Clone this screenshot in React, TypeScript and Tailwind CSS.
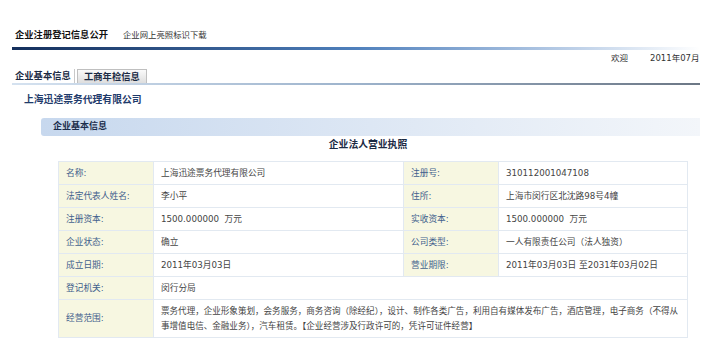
import React from "react";

const F = { fontFamily: '"DejaVu Sans", "Noto Sans CJK SC", sans-serif' };

function Label({ children }: { children: React.ReactNode }) {
  return (
    <td className="w-[95px] bg-[#f7f7e1] border border-[#e2e9f1] pl-[7px] text-[#41608c] align-middle">
      {children}
    </td>
  );
}
function Value({ children, span }: { children: React.ReactNode; span?: number }) {
  return (
    <td colSpan={span} className="bg-white border border-[#e2e9f1] pl-[7px] text-[#444] align-middle">
      {children}
    </td>
  );
}

export default function App() {
  return (
    <div className="w-[720px] h-[354px] bg-white overflow-hidden" style={F}>
      <div className="w-[700px] overflow-hidden">
        {/* top nav */}
        <div className="pt-[29px] pl-[15px] flex items-center h-[41px] text-[9px] leading-[12px]">
          <span className="font-bold text-[#111] text-[9.3px]">企业注册登记信息公开</span>
          <span className="ml-[15px] text-[#333] text-[8.4px]">企业网上亮照标识下载</span>
        </div>
        <div className="mt-[6px] ml-[12px] h-[3px] bg-gradient-to-r from-[#142f5c] via-[#4f80bc] to-white" />
        {/* welcome */}
        <div className="h-[16px] flex items-center text-[8.5px] text-[#333] whitespace-nowrap">
          <span className="ml-[611px]">欢迎</span>
          <span className="ml-[22px]">2011年07月</span>
        </div>
        {/* tabs */}
        <div className="mt-[3px] flex items-end h-[14px] pl-[12px] text-[9.3px] leading-[14px] font-bold text-[#1b2a44]">
          <div className="w-[63px] h-[14px] pl-[3px] border-r border-[#c9c9c9] bg-white">企业基本信息</div>
          <div className="ml-[2px] w-[70px] h-[14px] pl-[6px] border border-b-0 border-[#bfbfbf] bg-gradient-to-b from-[#fafafa] to-[#dedede]">工商年检信息</div>
        </div>
        <div className="ml-[12px] h-[2px] bg-gradient-to-r from-[#d5e2f0] via-[#9db3cc] to-[#6c7785]" />
        {/* company name */}
        <div className="mt-[9px] pl-[24px] h-[12px] leading-[12px] text-[9.8px] font-bold text-[#1f3b6b]">
          上海迅途票务代理有限公司
        </div>
        {/* section bar */}
        <div className="mt-[12px] ml-[41px] h-[18px] rounded-l-[3px] bg-gradient-to-r from-[#c7d8ee] via-[#dde7f4] to-[#f3f6fa] flex items-center pl-[12px] text-[9px] font-bold text-[#1b2d4c]">
          企业基本信息
        </div>
        {/* subtitle */}
        <div className="h-[18px] flex items-center justify-center pl-[36px] text-[9.8px] font-bold text-[#1b2a44]">
          企业法人营业执照
        </div>
        {/* table */}
        <div className="mt-[7px] ml-[58px] w-[629px]">
          <table className="w-full table-fixed border-collapse text-[8.7px] leading-[15px]">
            <colgroup>
              <col className="w-[95px]" />
              <col className="w-[250px]" />
              <col className="w-[95px]" />
              <col className="w-[189px]" />
            </colgroup>
            <tbody>
              <tr className="h-[23px]">
                <Label>名称:</Label>
                <Value>上海迅途票务代理有限公司</Value>
                <Label>注册号:</Label>
                <Value>310112001047108</Value>
              </tr>
              <tr className="h-[23px]">
                <Label>法定代表人姓名:</Label>
                <Value>李小平</Value>
                <Label>住所:</Label>
                <Value>上海市闵行区北沈路98号4幢</Value>
              </tr>
              <tr className="h-[23px]">
                <Label>注册资本:</Label>
                <Value>1500.000000&nbsp;&nbsp;万元</Value>
                <Label>实收资本:</Label>
                <Value>1500.000000&nbsp;&nbsp;万元</Value>
              </tr>
              <tr className="h-[23px]">
                <Label>企业状态:</Label>
                <Value>确立</Value>
                <Label>公司类型:</Label>
                <Value>一人有限责任公司（法人独资）</Value>
              </tr>
              <tr className="h-[23px]">
                <Label>成立日期:</Label>
                <Value>2011年03月03日</Value>
                <Label>营业期限:</Label>
                <Value>2011年03月03日 至2031年03月02日</Value>
              </tr>
              <tr className="h-[23px]">
                <Label>登记机关:</Label>
                <Value span={3}>闵行分局</Value>
              </tr>
              <tr className="h-[38px]">
                <Label>经营范围:</Label>
                <Value span={3}>
                  <div className="whitespace-nowrap text-[8.55px]">
                    票务代理，企业形象策划，会务服务，商务咨询（除经纪），设计、制作各类广告，利用自有媒体发布广告，酒店管理，电子商务（不得从
                    <br />
                    事增值电信、金融业务），汽车租赁。【企业经营涉及行政许可的，凭许可证件经营】
                  </div>
                </Value>
              </tr>
            </tbody>
          </table>
        </div>
      </div>
    </div>
  );
}
